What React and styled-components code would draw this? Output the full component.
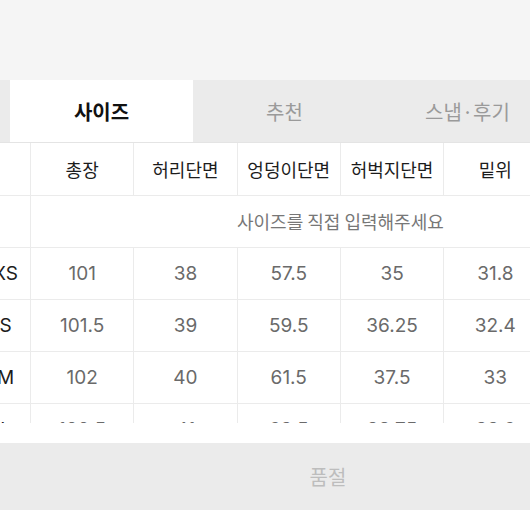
import React from "react";
import styled, { createGlobalStyle } from "styled-components";

const GlobalStyle = createGlobalStyle`
  html, body {
    margin: 0;
    padding: 0;
    background: #ffffff;
    overflow: hidden;
  }
  * {
    box-sizing: border-box;
  }
`;

const Page = styled.div`
  width: 530px;
  height: 530px;
  overflow: hidden;
  background: #ffffff;
  font-family: "Inter", "Noto Sans CJK KR", sans-serif;
`;

const TopArea = styled.div`
  height: 80px;
  background: #f5f5f5;
`;

const TabBar = styled.div`
  display: flex;
  height: 63px;
  padding-left: 10px;
  background: #ebebeb;
  border-bottom: 1px solid #e4e4e4;
`;

const Tab = styled.div`
  flex: 0 0 183px;
  display: flex;
  align-items: center;
  justify-content: center;
  font-family: "Noto Sans CJK KR", sans-serif;
  font-size: 20px;
  font-weight: ${({ $active }) => ($active ? 700 : 400)};
  color: ${({ $active }) => ($active ? "#111111" : "#9a9a9a")};
  background: ${({ $active }) => ($active ? "#ffffff" : "transparent")};
`;

const TableViewport = styled.div`
  height: 280px;
  overflow: hidden;
`;

const Table = styled.table`
  margin-left: -20px;
  border-collapse: collapse;
  table-layout: fixed;
  width: 670px;
`;

const Row = styled.tr`
  height: 52px;
`;

const Cell = styled.td`
  padding: 0;
  text-align: center;
  border: 1px solid #ebebeb;
  border-top: none;
  font-size: ${({ $head }) => ($head ? "18px" : "19px")};
  color: ${({ $dark }) => ($dark ? "#1c1c1c" : "#6a6a6a")};
  font-family: ${({ $head }) =>
    $head ? '"Noto Sans CJK KR", sans-serif' : '"Inter", "Noto Sans CJK KR", sans-serif'};
  white-space: nowrap;
`;

const HintCell = styled.td`
  padding: 0;
  text-align: center;
  border: 1px solid #ebebeb;
  font-family: "Noto Sans CJK KR", sans-serif;
  font-size: 18px;
  color: #777777;
`;

const Spacer = styled.div`
  height: 20px;
`;

const SoldOut = styled.div`
  width: 656px;
  height: 67px;
  display: flex;
  align-items: center;
  justify-content: center;
  background: #ebebeb;
  font-family: "Noto Sans CJK KR", sans-serif;
  font-size: 20px;
  color: #bdbdbd;
`;

const tabs = ["사이즈", "추천", "스냅·후기"];
const headers = ["총장", "허리단면", "엉덩이단면", "허벅지단면", "밑위", "밑단단면"];
const rows = [
  ["XS", "101", "38", "57.5", "35", "31.8", "17"],
  ["S", "101.5", "39", "59.5", "36.25", "32.4", "17.5"],
  ["M", "102", "40", "61.5", "37.5", "33", "18"],
  ["L", "102.5", "41", "63.5", "38.75", "33.6", "18.5"],
];

export default function App() {
  return (
    <Page>
      <GlobalStyle />
      <TopArea />
      <TabBar>
        {tabs.map((t, i) => (
          <Tab key={t} $active={i === 0}>
            {t}
          </Tab>
        ))}
      </TabBar>
      <TableViewport>
        <Table>
          <colgroup>
            <col style={{ width: 50 }} />
            {headers.map((h) => (
              <col key={h} style={{ width: 103.3 }} />
            ))}
          </colgroup>
          <tbody>
            <Row>
              <Cell $head $dark />
              {headers.map((h) => (
                <Cell key={h} $head $dark>
                  {h}
                </Cell>
              ))}
            </Row>
            <Row>
              <Cell />
              <HintCell colSpan={6}>사이즈를 직접 입력해주세요</HintCell>
            </Row>
            {rows.map(([size, ...vals]) => (
              <Row key={size}>
                <Cell $dark>{size}</Cell>
                {vals.map((v, i) => (
                  <Cell key={i}>{v}</Cell>
                ))}
              </Row>
            ))}
          </tbody>
        </Table>
      </TableViewport>
      <Spacer />
      <SoldOut>품절</SoldOut>
    </Page>
  );
}
